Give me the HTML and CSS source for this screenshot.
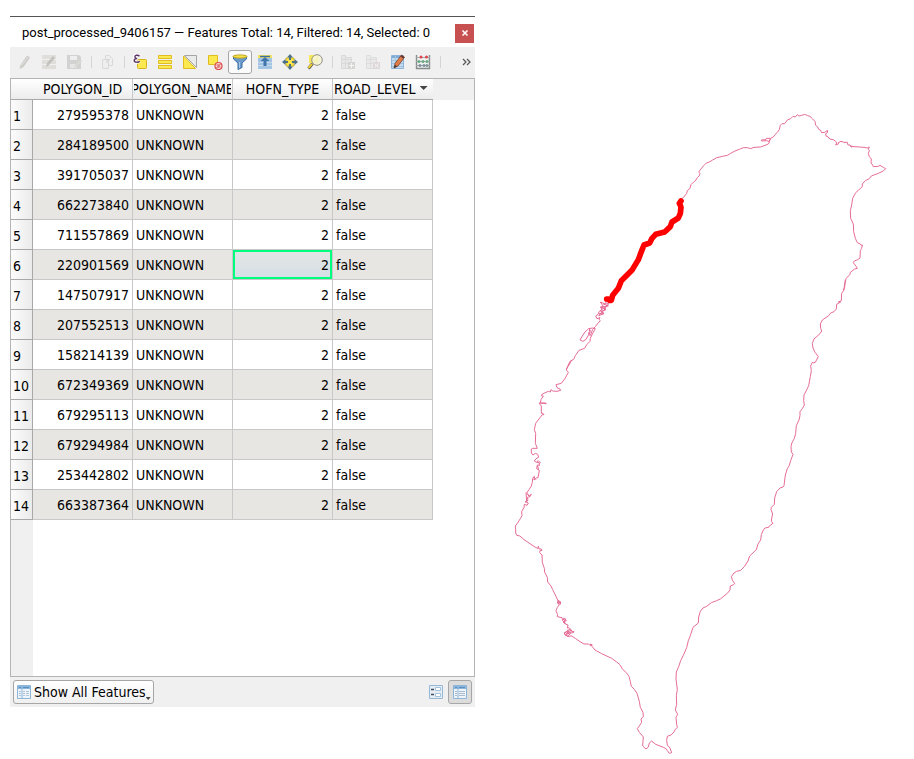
FILE: index.html
```html
<!DOCTYPE html>
<html lang="en">
<head>
<meta charset="utf-8">
<title>Attribute table</title>
<link rel="stylesheet" href="styles.css">
</head>
<body>
<main class="workspace">
<section class="window">
  <header class="titlebar">
    <h1>post_processed_9406157 — Features Total: 14, Filtered: 14, Selected: 0</h1>
    <button class="close" aria-label="Close"><svg width="8" height="8" viewBox="0 0 8 8"><path d="M1.500 1.500l5 5M6.500 1.500l-5 5" stroke="#fff" stroke-width="1.600"/></svg></button>
  </header>

  <div class="toolbar">
    <button class="tool off" aria-label="Toggle editing"><svg viewBox="0 0 16 16"><path d="M3.500 15l1-4L11 1.500l3 2L7.500 13z" fill="#aaa8a2"/><path d="M5.500 11.500L12 3" stroke="#d8d6d0"/></svg></button>
    <button class="tool off" aria-label="Multi edit"><svg viewBox="0 0 16 16"><path d="M1 1h14v4H1zM1 6h14v4H1zM1 11h14v4H1z" fill="#d0cec6"/><path d="M5 13l1-4 6-7 2 2-6 7z" fill="#96948e"/></svg></button>
    <button class="tool off" aria-label="Save edits"><svg viewBox="0 0 16 16"><path d="M1 1h12l2 2v12H1z" fill="#b5b5b5"/><path d="M4 2h7v4H4z" fill="#eee"/><path d="M4 10h7v4H4z" fill="#ddd"/><path d="M8 14l1-3 5-6 2 2-5 6z" fill="#c4c2ba"/></svg></button>
    <span class="sep"></span>
    <button class="tool off" aria-label="Copy"><svg viewBox="0 0 16 16"><path d="M6.500 1.500h4l3 3v7h-7z" fill="#eee" stroke="#c4c4c4"/><path d="M3.500 5.500h6v9h-6z" fill="#eee" stroke="#c4c4c4"/><path d="M8 9V6l3-1" fill="none" stroke="#b6b6b6"/></svg></button>
    <span class="sep"></span>
    <button class="tool" aria-label="Select by expression"><svg viewBox="0 0 16 16"><rect x="5.500" y="5.500" width="9" height="9" rx="1" fill="#fce94f" stroke="#d8b51a"/><path d="M7.500 2.200C6 .5 2.500 1 2.700 3c.1 1.200 1.300 1.500 2.500 1.500C3.500 4.500 2 5 2 6.300 2 8.500 6.500 8.800 7.500 7" fill="none" stroke="#fff" stroke-width="3"/><path d="M7.500 2.300C6 .6 2.800 1 2.900 3c.1 1.200 1.200 1.500 2.300 1.500C3.500 4.500 2.200 5 2.200 6.400 2.200 8.600 6.500 8.600 7.700 7.200" fill="none" stroke="#5a3265" stroke-width="1.400"/></svg></button>
    <button class="tool" aria-label="Select all"><svg viewBox="0 0 16 16"><g fill="#fce94f" stroke="#dfbd22"><path d="M1.500 1.500h13v3h-13zM1.500 6.500h13v3h-13zM1.500 11.500h13v3h-13z"/></g></svg></button>
    <button class="tool" aria-label="Invert selection"><svg viewBox="0 0 16 16"><path d="M2.500 1.500h12v12z" fill="#e9eaea" stroke="#a4a6a6"/><path d="M1.500 2v12.500h12z" fill="#fce94f" stroke="#dfbd22"/></svg></button>
    <button class="tool" aria-label="Deselect all"><svg viewBox="0 0 16 16"><path d="M1.500 1.500h9v9h-9z" fill="#fce94f" stroke="#dfbd22"/><circle cx="11.500" cy="12" r="3.500" fill="#f8dddd" stroke="#dc4c4c" stroke-width="1.200"/><path d="M9 14.500l5-5M9.500 11h3M10.500 13h3" stroke="#dc4c4c"/></svg></button>
    <button class="tool pressed" aria-label="Filter"><svg viewBox="0 0 16 16"><path d="M1.500 3v2l4.500 4v6.500l4-2V9l4.500-4V3z" fill="#6a9acb" stroke="#3b6da2"/><path d="M7.500 8v6" stroke="#a8c9e8"/><ellipse cx="8" cy="2.500" rx="7" ry="1.600" fill="#f4df48" stroke="#c3a61e"/></svg></button>
    <button class="tool" aria-label="Move selection to top"><svg viewBox="0 0 16 16"><path d="M1 1h14v3H1z" fill="#f2e261"/><path d="M1 4h14v11H1z" fill="#a4c4e4"/><path d="M1 8.500h14M1 11.500h14" stroke="#c4d9ed"/><path d="M3 2.500h10" stroke="#3f6e9f" stroke-width="1.500"/><path d="M8 3l4.500 4h-3v5h-3V7h-3z" fill="#3f75ab"/></svg></button>
    <button class="tool" aria-label="Pan map to selection"><svg viewBox="0 0 16 16"><path d="M4 4h8v8H4z" fill="#fae64a" stroke="#d5b12b"/><path d="M8 0l3 3.500H9V6H7V3.500H5zM8 16l3-3.500H9V10H7v2.500H5zM0 8l3.500-3v2H6v2H3.500v2zM16 8l-3.500-3v2H10v2h2.500v2z" fill="#4d7186"/></svg></button>
    <button class="tool" aria-label="Zoom map to selection"><svg viewBox="0 0 16 16"><path d="M5.500 9.500l-4 5" stroke="#55534a" stroke-width="3"/><path d="M5 9.800l-3.500 4" stroke="#f0d433" stroke-width="2"/><path d="M2 1h9v8H2z" fill="#f8e65a"/><circle cx="10" cy="6" r="5.300" fill="#f6f3d0" fill-opacity=".85" stroke="#92938c"/><path d="M7 5c.4-1.200 1.400-2 2.500-2" stroke="#fff" fill="none"/></svg></button>
    <span class="sep"></span>
    <button class="tool off" aria-label="New field"><svg viewBox="0 0 16 16"><path d="M1.500 1.500h4v13h-4zM5.500 3.500h6v11h-6zM1.500 5.500h10M1.500 9.500h10" fill="#e0e0e0" stroke="#c4c4c4"/><path d="M8 8h7v7H8z" fill="#bcbcb4"/><path d="M11.500 9v5M9 11.500h5" stroke="#fff"/></svg></button>
    <button class="tool off" aria-label="Delete field"><svg viewBox="0 0 16 16"><path d="M1.500 1.500h4v13h-4zM5.500 3.500h6v11h-6zM1.500 5.500h10M1.500 9.500h10" fill="#e6e6e6" stroke="#ccc"/><path d="M8 8h7v7H8z" fill="#cfc2c2"/><path d="M9.500 9.500l4 4M13.500 9.500l-4 4" stroke="#fff"/></svg></button>
    <button class="tool" aria-label="Edit field"><svg viewBox="0 0 16 16"><path d="M1.500 1.500h12v13h-12z" fill="#c3d9ee" stroke="#8db4d8"/><path d="M2 3h11" stroke="#7eabd5" stroke-width="2"/><path d="M2 6.500h11M2 9.500h11M2 12.500h11M5.500 2v12" stroke="#a3c3e1"/><path d="M4 14l1-4.500L11.500 1l3 2.200L8 12z" fill="#e37b45" stroke="#754433" stroke-width=".8"/><path d="M4 14l1-3 2 1.300z" fill="#333"/><path d="M11.500 1l3 2.200-1.200 1.600-3-2.200z" fill="#6a3b35"/></svg></button>
    <button class="tool" aria-label="Field calculator"><svg viewBox="0 0 16 16"><path d="M1.500 1v14M14.500 1v14M1 14.500h14" stroke="#858a8a" stroke-width="1.400"/><path d="M1 3.500h14M1 7.500h14M1 11.500h14" stroke="#a2a8a8"/><g fill="#e0454c"><circle cx="6" cy="3" r="1.500"/><circle cx="11.500" cy="3" r="1.500"/></g><g fill="#6aab82"><circle cx="4" cy="7.500" r="1.500"/><circle cx="8" cy="7.500" r="1.500"/><circle cx="12" cy="7.500" r="1.500"/></g><g fill="#80939d"><circle cx="5" cy="11.500" r="1.500"/><circle cx="9" cy="11.500" r="1.500"/><circle cx="12" cy="11.500" r="1.500"/></g></svg></button>
    <span class="sep"></span>
    <button class="more" aria-label="More tools"><svg width="9" height="8" viewBox="0 0 9 8"><path d="M1 1l3 3-3 3M5 1l3 3-3 3" fill="none" stroke="#555" stroke-width="1.200"/></svg></button>
  </div>

  <div class="view">
    <table>
      <thead><tr><th class="corner"></th><th><span>POLYGON_ID</span></th><th><span>POLYGON_NAME</span></th><th><span>HOFN_TYPE</span></th><th><span class="sorted">ROAD_LEVEL<i class="caret"></i></span></th><th class="rest"></th></tr></thead>
      <tbody>
        <tr><th>1</th><td class="num">279595378</td><td>UNKNOWN</td><td class="num">2</td><td>false</td></tr>
        <tr><th>2</th><td class="num">284189500</td><td>UNKNOWN</td><td class="num">2</td><td>false</td></tr>
        <tr><th>3</th><td class="num">391705037</td><td>UNKNOWN</td><td class="num">2</td><td>false</td></tr>
        <tr><th>4</th><td class="num">662273840</td><td>UNKNOWN</td><td class="num">2</td><td>false</td></tr>
        <tr><th>5</th><td class="num">711557869</td><td>UNKNOWN</td><td class="num">2</td><td>false</td></tr>
        <tr><th>6</th><td class="num">220901569</td><td>UNKNOWN</td><td class="num current">2</td><td>false</td></tr>
        <tr><th>7</th><td class="num">147507917</td><td>UNKNOWN</td><td class="num">2</td><td>false</td></tr>
        <tr><th>8</th><td class="num">207552513</td><td>UNKNOWN</td><td class="num">2</td><td>false</td></tr>
        <tr><th>9</th><td class="num">158214139</td><td>UNKNOWN</td><td class="num">2</td><td>false</td></tr>
        <tr><th>10</th><td class="num">672349369</td><td>UNKNOWN</td><td class="num">2</td><td>false</td></tr>
        <tr><th>11</th><td class="num">679295113</td><td>UNKNOWN</td><td class="num">2</td><td>false</td></tr>
        <tr><th>12</th><td class="num">679294984</td><td>UNKNOWN</td><td class="num">2</td><td>false</td></tr>
        <tr><th>13</th><td class="num">253442802</td><td>UNKNOWN</td><td class="num">2</td><td>false</td></tr>
        <tr><th>14</th><td class="num">663387364</td><td>UNKNOWN</td><td class="num">2</td><td>false</td></tr>
      </tbody>
    </table>
  </div>

  <footer class="statusbar">
    <button class="show-all">
      <svg width="14" height="14" viewBox="0 0 14 14"><path d="M.5.5h13v13H.5z" fill="#eef4f9" stroke="#8db5d8"/><path d="M1 1h12v3H1z" fill="#8ab6dd"/><path d="M5 1v12" stroke="#8db5d8"/><path d="M2 2.500h2M6 2.500h6" stroke="#5a8fc0"/><path d="M2 6.500h2M6 6.500h2M9 6.500h3M2 8.500h2M6 8.500h2M9 8.500h3M2 10.500h2M6 10.500h2M9 10.500h3" stroke="#adc6dc"/></svg>
      <span>Show All Features</span><i class="caret small"></i>
    </button>
    <div class="modes">
      <button class="mode" aria-label="Form view"><svg width="14" height="14" viewBox="0 0 14 14"><path d="M.5.5h13v13H.5z" fill="#e6edf3" stroke="#94b8d8"/><path d="M2 4.500h3M2 9.500h3" stroke="#444c60" stroke-width="1.500"/><path d="M6.500 2.500h5v3h-5zM6.500 8.500h5v3h-5z" fill="#fff" stroke="#a4c2de"/></svg></button>
      <button class="mode on" aria-label="Table view"><svg width="14" height="14" viewBox="0 0 14 14"><path d="M.5.5h13v13H.5z" fill="#eef4f9" stroke="#8db5d8"/><path d="M1 1h12v3H1z" fill="#8ab6dd"/><path d="M5 1v12" stroke="#8db5d8"/><path d="M2 2.500h2M6 2.500h6" stroke="#5a8fc0"/><path d="M2 6.500h2M6 6.500h6M2 8.500h2M6 8.500h6M2 10.500h2M6 10.500h6" stroke="#a8bccd"/></svg></button>
    </div>
  </footer>
</section>

<svg class="map" viewBox="475 0 439 759" role="img" aria-label="Coastline map">
  <g class="coast">
    <path transform="translate(660 90) scale(.33333)" d="M64 328L74 318L80 310L82 302L90 295L93 284L101 276L108 270L112 263L118 257L120 250L116 246L123 237L130 228L138 220L150 215L158 210L170 203L188 199L202 196L212 190L225 183L238 178L250 173L262 173L272 176L282 172L302 171L315 166L325 162L329 155L320 152L305 153L304 150L318 149L319 145L330 145L331 149L327 154L332 145L340 141L345 134L352 127L358 119L361 106L366 101L374 101L382 90L392 86L399 79L406 81L412 74L417 78L425 76L434 73L443 77L450 79L458 87L465 94L467 106L473 111L476 118L482 121L485 128L494 127L503 121L502 128L497 131L498 138L505 141L509 147L520 149L527 154L530 159L527 165L535 162L535 158L543 154L552 157L562 157L564 165L570 165L575 172L572 168L582 170L598 171L612 172L622 174L628 171L625 178L628 182L625 190L628 200L634 207L633 219L638 225L640 230L655 229L660 226L670 232L677 236L670 243L655 250L634 258L628 266L616 272L607 282L607 290L596 300L587 308L578 325L575 345L571 362L572 385L580 402L581 425L586 445L592 458L601 462L603 466L607 465L605 475L601 482L600 504L593 509L583 513L580 518L589 530L592 535L584 537L571 547L570 553L558 566L555 582L554 592L550 600"/>
    <path transform="translate(740 280) scale(.33333)" d="M316 0L313 18L312 30L305 40L304 62L295 66L302 66L290 73L289 87L282 95L272 99L266 107L247 120L241 132L242 145L245 153L240 161L222 177L217 190L219 204L225 217L235 230L228 243L226 247L219 249L217 247L212 258L214 272L211 290L206 317L200 330L192 345L191 362L193 375L187 386L180 395L180 407L177 420L169 437L167 460L163 475L156 488L153 500L154 516L159 523L152 542L148 556L142 566L136 585L132 617L129 621L120 624L110 635L104 654L103 673L94 682L93 689L98 702L96 711L94 720"/>
    <path transform="translate(620 500) scale(.33333)" d="M454 60L455 65L459 70L448 78L446 82L435 84L430 90L424 104L422 120L414 132L409 149L389 168L384 183L373 200L362 211L350 214L342 219L334 230L338 242L344 250L341 254L331 258L330 270L322 280L301 297L290 302L274 308L260 319L249 324L241 334L236 351L235 369L219 382L211 407L205 422L200 443L190 466L182 482L176 500L169 516L168 537L172 569L169 586L170 613L166 630L173 643L168 652L170 673L172 682L166 688L162 696L153 705L142 709L140 721L142 735L150 744L155 758L148 760L142 752L139 747L130 742L107 733L95 723L88 729L85 741L78 747L68 738L70 711L65 705L58 697L52 686L60 675L65 667L63 657L70 650L69 637L61 622L58 604L51 580L43 568L34 559L31 545L27 529L19 518L8 508L0 495"/>
    <path transform="translate(500 530) scale(.33333)" d="M360 404L350 396L335 385L305 371L285 360L276 349L271 342L277 345L271 347L266 342L252 342L240 335L226 325L213 317L208 320L196 315L193 308L205 304L199 312L208 310L203 300L212 300L208 308L218 309L222 304L216 305L213 299L207 293L202 294L204 285L196 282L190 276L199 272L194 264L188 271L186 263L172 260L173 254L168 242L172 232L178 224L172 219L175 211L182 216L181 223L175 220L174 212L166 195L158 179L153 168L143 156L142 142L134 127L133 115L127 98L126 75L119 68L120 62L126 61L124 57L117 57L115 49L114 55L108 53L90 41L72 29L60 18L50 16L47 9L47 0"/>
    <path transform="translate(500 530) scale(.33333)" d="M174 213l7 8M181 213l-7 9M192 311l10-9 10 8-9 10zM197 317l10-10M199 304l10 11M187 271l10 10M198 269l-9 8M191 263l4 18M207 296l14 12"/>
    <path transform="translate(500 360) scale(.33333)" d="M47 510L46 498L54 487L61 476L66 467L65 455L72 442L73 433L81 436L85 429L76 425L84 421L82 412L90 410L94 403L88 407L80 399L87 389L94 378L97 367L98 355L103 349L102 360L109 354L114 353L118 331L110 326L112 315L119 316L117 311L121 308L115 302L109 307L103 303L107 297L116 292L113 283L106 280L99 285L94 279L94 267L98 265L112 265L106 250L107 220L103 209L107 190L120 173L127 164L132 164L129 160L124 160L124 138L117 129L139 131L137 129L121 129L123 119L130 108L124 107L127 102L145 94L151 96L153 89L158 93L171 94L182 91L180 87L171 83L168 74L184 70L196 54L205 37L199 30L201 24L209 12L213 3L217 0"/>
    <path transform="translate(500 360) scale(.33333)" d="M78 397l2 28M82 403l7 7M84 420l-8 8M100 351l8 8M110 306l9 3M113 318l3 12"/>
    <path transform="translate(560 190) scale(.33333)" d="M19 540L23 529L30 514L41 508L46 497L57 481L74 475L80 464L90 454L91 445L97 432L106 416L98 414L86 416L75 426L67 438L60 450L69 454L78 448L84 438L90 428L88 416L91 424L84 430L91 437L98 418L106 410L112 402L121 392L117 388L120 383L111 386L107 378L114 373L118 364L125 359L123 350L131 351L121 336L133 341L139 337L137 330M116 371L132 371L116 377L136 356L121 352L145 348L130 342L147 341L134 352L137 360L122 365L130 369L124 359L141 349"/>
  </g>
  <path class="segment" transform="translate(560 190) scale(.33333)" d="M363 33L358 40L361 46L363 52L361 70L355 84L336 96L331 110L314 126L287 133L276 145L269 159L252 165L244 185L235 209L217 239L184 272L175 295L158 316L154 331L148 331L145 327L140 327"/>
</svg>
</main>
</body>
</html>
```

FILE: styles.css
```css
* { box-sizing: border-box; }

body {
  margin: 0;
  background: #fff;
  color: #000;
  font: 14px/20px "DejaVu Sans Condensed", "DejaVu Sans", sans-serif;
}

button {
  margin: 0;
  padding: 0;
  border: 0;
  background: none;
  color: inherit;
  font: inherit;
}

svg { display: block; }

.workspace {
  display: grid;
  grid-template-columns: minmax(0, 465fr) minmax(0, 439fr);
  align-items: start;
  padding-left: 10px;
}

.window {
  display: flex;
  flex-direction: column;
  min-height: calc(100vh - 68px);
  margin-top: 16px;
  border-top: 1px solid #555;
  background: #f0f0f0;
}

.titlebar {
  display: flex;
  align-items: center;
  justify-content: space-between;
  height: 30px;
  padding: 2px 1px 0 12px;
  background: #fff;
}

.titlebar h1 {
  margin: 0;
  font: 13px/20px Roboto, "Noto Sans", sans-serif;
  white-space: nowrap;
}

.close {
  display: grid;
  place-items: center;
  width: 19px;
  height: 19px;
  background: #c75050;
}

.toolbar {
  display: flex;
  align-items: center;
  gap: 1px;
  height: 31px;
  padding: 0 4px 2px 2px;
}

.tool {
  display: grid;
  place-items: center;
  flex: none;
  width: 24px;
  height: 24px;
}

.tool svg { width: 16px; height: 16px; }
.tool.off svg { opacity: .5; }

.tool.pressed {
  border: 1px solid #a6a6a6;
  border-radius: 3px;
  background: #fbfbfb;
}

.sep {
  flex: none;
  width: 1px;
  height: 12px;
  margin: 0 2px 0 4px;
  background: #d4d4d4;
}

.more { margin-left: auto; }

.view {
  flex: 1;
  border: 1px solid #b4b4b4;
  background: linear-gradient(to right, #f0f0f0 22px, #fff 22px);
}

table {
  width: 100%;
  border-collapse: separate;
  border-spacing: 0;
  table-layout: fixed;
}

th { padding: 0; font-weight: normal; }

thead th {
  width: 100px;
  height: 21px;
  border-right: 1px solid #c8c8c8;
  border-bottom: 1px solid #a8a8a8;
  background: linear-gradient(#fff, #ececec);
}

thead span {
  display: flex;
  justify-content: center;
  margin: 0 1px;
  overflow: hidden;
}

thead .corner { width: 22px; border-right: 0; }
thead .rest { width: auto; border: 0; background: #f0f0f0; }
thead .sorted { justify-content: flex-start; gap: 4px; }
thead th:nth-child(5) { border-right: 0; }

.caret {
  flex: none;
  width: 8px;
  height: 4px;
  margin-top: 7px;
  background: #444;
  clip-path: polygon(0 0, 100% 0, 50% 100%);
}

tbody th {
  height: 30px;
  padding: 2px 0 0 2px;
  border-right: 1px solid #a8a8a8;
  border-bottom: 1px solid #a8a8a8;
  background: linear-gradient(to right, #fcfcfc, #ebebeb);
  text-align: left;
}

td {
  height: 30px;
  padding: 0 3px;
  border-right: 1px solid #c8c8c8;
  border-bottom: 1px solid #c8c8c8;
  background: #fff;
}

tr:nth-child(even) td { background: #e8e6e2; }

.num { text-align: right; }

tr:nth-child(even) td.current {
  background: linear-gradient(#e4e6e4, #d5dfe7);
  box-shadow: inset 0 0 0 2px #00ff7f;
}

.statusbar {
  display: flex;
  align-items: center;
  justify-content: space-between;
  height: 30px;
  padding: 0 3px;
}

.show-all {
  display: flex;
  align-items: center;
  height: 24px;
  padding: 0 2px 0 3px;
  border: 1px solid #a6a6a6;
  border-radius: 3px;
  background: linear-gradient(#fff, #f0f0f0);
}

.show-all svg { margin-right: 3px; }

.caret.small {
  align-self: flex-end;
  width: 5px;
  height: 3px;
  margin: 0 0 3px;
}

.modes { display: flex; }

.mode {
  display: grid;
  place-items: center;
  width: 24px;
  height: 24px;
}

.mode.on {
  border: 1px solid #a6a6a6;
  border-radius: 3px;
  background: #dcdcdc;
}

.map { width: 100%; height: auto; }

.coast path {
  fill: none;
  stroke: #e56b97;
  stroke-width: 3;
  stroke-linejoin: round;
}

.segment {
  fill: none;
  stroke: #f00;
  stroke-width: 17;
  stroke-linejoin: round;
  stroke-linecap: round;
}
```
